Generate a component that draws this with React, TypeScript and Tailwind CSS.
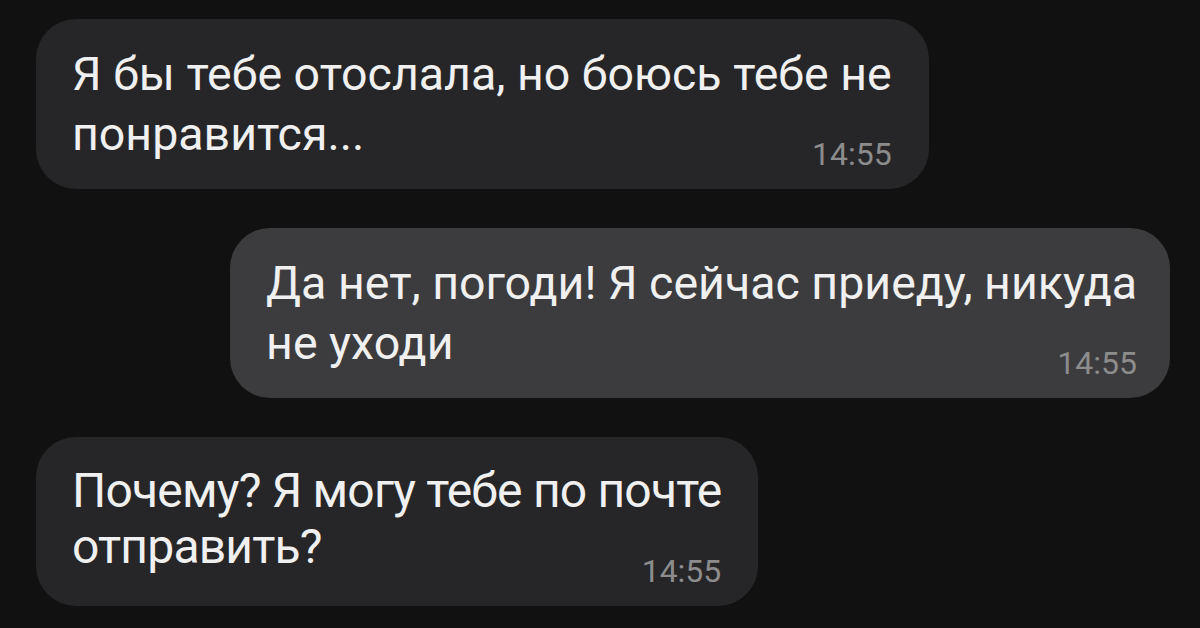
import React from 'react';

type Msg = { lines: string[]; time: string; mine?: boolean; big?: boolean };

const MESSAGES: Msg[] = [
  { lines: ['Я бы тебе отослала, но боюсь тебе не', 'понравится...'], time: '14:55' },
  { lines: ['Да нет, погоди! Я сейчас приеду, никуда', 'не уходи'], time: '14:55', mine: true },
  { lines: ['Почему? Я могу тебе по почте', 'отправить?'], time: '14:55', big: true },
];

const Bubble: React.FC<{ msg: Msg }> = ({ msg }) => (
  <div
    className={`rounded-[40px] pl-[36px] pb-[19px] ${
      msg.mine ? 'bg-[#3c3c3e] self-end pr-[33px]' : 'bg-[#262628] self-start pr-[37px]'
    } ${msg.big ? 'pt-[26px]' : 'pt-[25px]'}`}
  >
    <div
      className={`text-[#f0f0f0] whitespace-nowrap ${
        msg.big ? 'text-[48px] leading-[56px] tracking-[-0.8px]' : 'text-[46.5px] leading-[60px]'
      }`}
    >
      {msg.lines.map((l) => (
        <div key={l}>{l}</div>
      ))}
    </div>
    <div
      className={`flex justify-end text-[32px] leading-[32px] text-[#8c8c8c] ${
        msg.big ? '-mt-[20px]' : '-mt-[26px]'
      }`}
    >
      {msg.time}
    </div>
  </div>
);

export default function App() {
  return (
    <div
      className="w-[1200px] h-[628px] overflow-hidden bg-[#111111] pt-[19px] pl-[36px] pr-[30px] flex flex-col gap-[39px]"
      style={{ fontFamily: 'Roboto, "Noto Sans", sans-serif' }}
    >
      {MESSAGES.map((m, i) => (
        <Bubble key={i} msg={m} />
      ))}
    </div>
  );
}
